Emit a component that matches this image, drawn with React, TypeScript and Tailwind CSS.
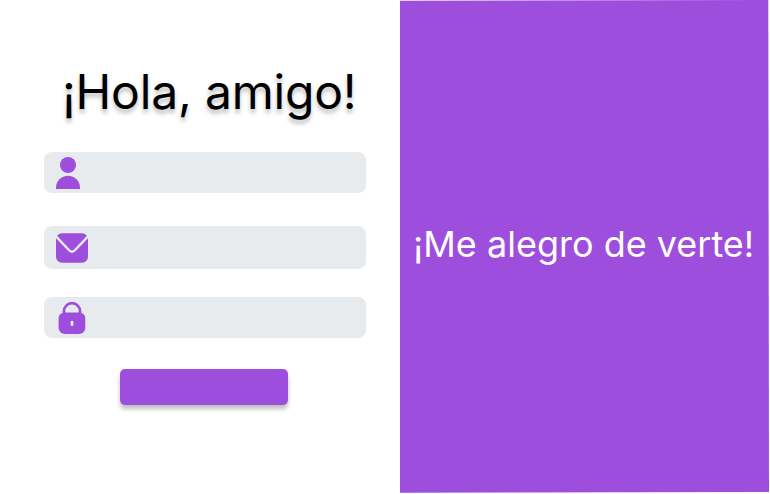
import React from "react";

function UserIcon() {
  return (
    <svg width="24" height="32" viewBox="0 0 24 32" fill="#9e4edd" aria-hidden="true">
      <circle cx="12" cy="8" r="8" />
      <path d="M0 32V30.8a12 12 0 0 1 24 0V32Z" />
    </svg>
  );
}

function MailIcon() {
  return (
    <svg width="32" height="30" viewBox="0 0 32 30" aria-hidden="true">
      <rect y="0.2" width="32" height="29.600" rx="6" fill="#9e4edd" />
      <path
        d="M0 3.400 12.900 17Q16 20.400 19.100 17L32 3.400"
        fill="none"
        stroke="#e7ebee"
        strokeWidth="2.400"
      />
    </svg>
  );
}

function LockIcon() {
  return (
    <svg width="28" height="32" viewBox="-0.6 0 28 32" fill="#9e4edd" aria-hidden="true">
      <path
        fillRule="evenodd"
        d="M4 11V9.300a9.400 9.400 0 0 1 18.800 0V11c2.300.5 3.900 2.500 3.900 5.300v9c0 4-2.700 6.700-6.700 6.700H6.700C2.700 32 0 29.300 0 25.300v-9C0 13.500 1.500 11.500 4 11ZM6.700 10.600h13.400V9.300a6.700 6.700 0 0 0-13.400 0ZM13.400 18.700A1.400 1.400 0 0 0 12 20.100v2.600a1.400 1.400 0 0 0 2.800 0V20.100a1.400 1.400 0 0 0-1.400-1.400Z"
      />
    </svg>
  );
}

export default function App() {
  return (
    <main className="flex h-[494px] w-[770px] overflow-hidden bg-white font-['Inter',sans-serif]">
      <section className="flex w-[400px] shrink-0 flex-col pl-11 pt-[63px]">
        <h1 className="ml-[18px] h-[58px] whitespace-nowrap text-[48px] leading-[58px] tracking-[-0.18px] text-black [text-shadow:0_4px_4px_rgba(0,0,0,0.25)]">
          ¡Hola, amigo!
        </h1>
        <div className="mt-[31px] flex h-[41px] w-[322px] items-start rounded-lg bg-[#e7ebee] pl-3 pt-[5px]">
          <UserIcon />
        </div>
        <div className="mt-[33px] flex h-[43px] w-[322px] items-start rounded-lg bg-[#e7ebee] pl-3 pt-[7px]">
          <MailIcon />
        </div>
        <div className="mt-7 flex h-[41px] w-[322px] items-start rounded-lg bg-[#e7ebee] pl-[14px] pt-[5px]">
          <LockIcon />
        </div>
        <button
          type="button"
          className="ml-[76.300px] mt-[31px] h-9 w-[168px] rounded-[5px] bg-[#9e4edd] shadow-[0_4px_4px_rgba(0,0,0,0.25)]"
        />
      </section>
      <section className="flex h-[493px] w-[370px] shrink-0 bg-[#9e4edd] pl-[13px] pt-[222px] [clip-path:polygon(0_0.7px,368.3px_0,369px_492px,0_492.7px)]">
        <p className="whitespace-nowrap text-[36px] font-normal leading-[44px] text-white">¡Me alegro de verte!</p>
      </section>
    </main>
  );
}
